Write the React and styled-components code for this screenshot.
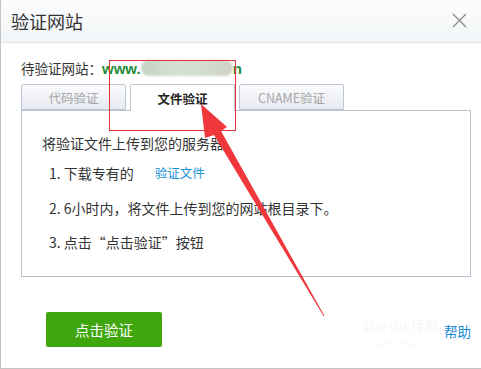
import styled, { createGlobalStyle } from 'styled-components'

const GlobalStyle = createGlobalStyle`
  body {
    margin: 0;
    background: #fff;
    font-family: "Noto Sans CJK SC", "Noto Sans", sans-serif;
  }
`

const App = () => {
  return (
    <>
      <GlobalStyle />
      <Dialog>
        <Header>
          <Title>验证网站</Title>
          <Close aria-label="close">
            <svg width="15" height="15" viewBox="0 0 15 15">
              <path d="M1 1 L14 14 M14 1 L1 14" stroke="#8a8a8a" strokeWidth="1.3" fill="none" />
            </svg>
          </Close>
        </Header>
        <Body>
          <SiteRow>
            待验证网站：<Domain>www.</Domain><Blur /><Domain>n</Domain>
          </SiteRow>
          <Tabs>
            <Tab>代码验证</Tab>
            <Tab active>文件验证</Tab>
            <Tab>CNAME验证</Tab>
          </Tabs>
          <Panel>
            <Intro>将验证文件上传到您的服务器</Intro>
            <Step>1. 下载专有的<Link>验证文件</Link></Step>
            <Step gap={15}>2. 6小时内，将文件上传到您的网站根目录下。</Step>
            <Step gap={14}>3. 点击“点击验证”按钮</Step>
          </Panel>
          <Footer>
            <VerifyButton>点击验证</VerifyButton>
            <Help>帮助</Help>
          </Footer>
        </Body>
        <Watermark>
          <span>Bai du 经验</span>
          <small>jingyan.baidu.com</small>
        </Watermark>
        <Overlay width="481" height="369" viewBox="0 0 481 369">
          <rect x="109.5" y="60.5" width="126" height="70" fill="none" stroke="#e8323a" strokeWidth="1" />
          <polygon
            points="201,104 227,127 221,131 324.5,316 323.5,316 214,135 205,138"
            fill="#f0373c"
          />
        </Overlay>
      </Dialog>
    </>
  )
}

const Dialog = styled.div`
  position: relative;
  width: 481px;
  height: 369px;
  box-sizing: border-box;
  border-left: 1px solid #c3c3c3;
  border-bottom: 1px solid #c3c3c3;
  background: #fff;
  overflow: hidden;
`

const Header = styled.div`
  height: 43px;
  box-sizing: border-box;
  display: flex;
  align-items: center;
  justify-content: space-between;
  padding: 0 14px 0 10px;
  background: linear-gradient(#fbfcfd, #f2f5f7);
  border-bottom: 1px solid #e0e5e9;
`

const Title = styled.h1`
  margin: 0;
  font-size: 18px;
  font-weight: normal;
  color: #333;
`

const Close = styled.div`
  display: flex;
  width: 15px;
  height: 15px;
  margin-top: -2px;
`

const Body = styled.div`
  padding: 0 10px 0 20px;
`

const SiteRow = styled.div`
  display: flex;
  align-items: center;
  margin-top: 15px;
  height: 20px;
  font-size: 13.5px;
  color: #333;
`

const Domain = styled.span`
  color: #1e8c3a;
  font-family: "Liberation Sans", sans-serif;
  font-weight: bold;
  font-size: 15px;
`

const Blur = styled.span`
  display: inline-block;
  width: 92px;
  height: 16px;
  border-radius: 8px;
  background: linear-gradient(90deg, #c5d5c5, #d6dfd3 40%, #d2dccf 70%, #cfd2c6);
  filter: blur(1px);
`

const Tabs = styled.div`
  display: flex;
  gap: 4px;
  margin-top: 6px;
`

const Tab = styled.div`
  width: 105px;
  height: ${p => (p.active ? '27px' : '26px')};
  margin-bottom: ${p => (p.active ? '-1px' : '0')};
  box-sizing: border-box;
  display: flex;
  align-items: center;
  justify-content: center;
  border: 1px solid #bcc5d2;
  border-bottom: ${p => (p.active ? 'none' : '1px solid #bcc5d2')};
  border-radius: 2px 2px 0 0;
  background: ${p => (p.active ? '#fff' : 'linear-gradient(#fbfcfd, #e6e9f0)')};
  font-size: 12.5px;
  font-weight: ${p => (p.active ? 'bold' : 'normal')};
  color: ${p => (p.active ? '#222' : '#a6a6a6')};
  position: relative;
  z-index: 1;
`

const Panel = styled.div`
  width: 450px;
  height: 167px;
  box-sizing: border-box;
  border: 1px solid #b7c0cd;
  padding: 22px 20px 0;
  color: #333;
  font-size: 14px;
`

const Intro = styled.div`
  line-height: 20px;
`

const Step = styled.div`
  display: flex;
  align-items: center;
  line-height: 20px;
  padding-left: 7px;
  margin-top: ${p => p.gap || 10}px;
`

const Link = styled.span`
  color: #1a92d8;
  font-size: 12.5px;
  margin-left: 21px;
`

const Footer = styled.div`
  display: flex;
  align-items: center;
  justify-content: space-between;
  margin-top: 35px;
  padding-left: 25px;
`

const VerifyButton = styled.button`
  width: 116px;
  height: 35px;
  border: none;
  border-radius: 2px;
  background: #3fa70d;
  color: #fff;
  font-family: "Noto Sans CJK SC", sans-serif;
  font-size: 14.5px;
  cursor: pointer;
`

const Help = styled.a`
  color: #1a8ad6;
  font-size: 13.5px;
  margin-top: 2px;
`

const Watermark = styled.div`
  position: absolute;
  left: 363px;
  top: 316px;
  display: flex;
  flex-direction: column;
  color: rgba(0, 0, 0, 0.05);
  font-family: "Liberation Sans", "Noto Sans CJK SC", sans-serif;
  font-size: 14px;
  font-weight: bold;
  line-height: 20px;
  pointer-events: none;

  small {
    font-size: 9px;
    font-weight: normal;
    line-height: 14px;
  }
`

const Overlay = styled.svg`
  position: absolute;
  left: -1px;
  top: 0;
  pointer-events: none;
  z-index: 2;
`

export default App
